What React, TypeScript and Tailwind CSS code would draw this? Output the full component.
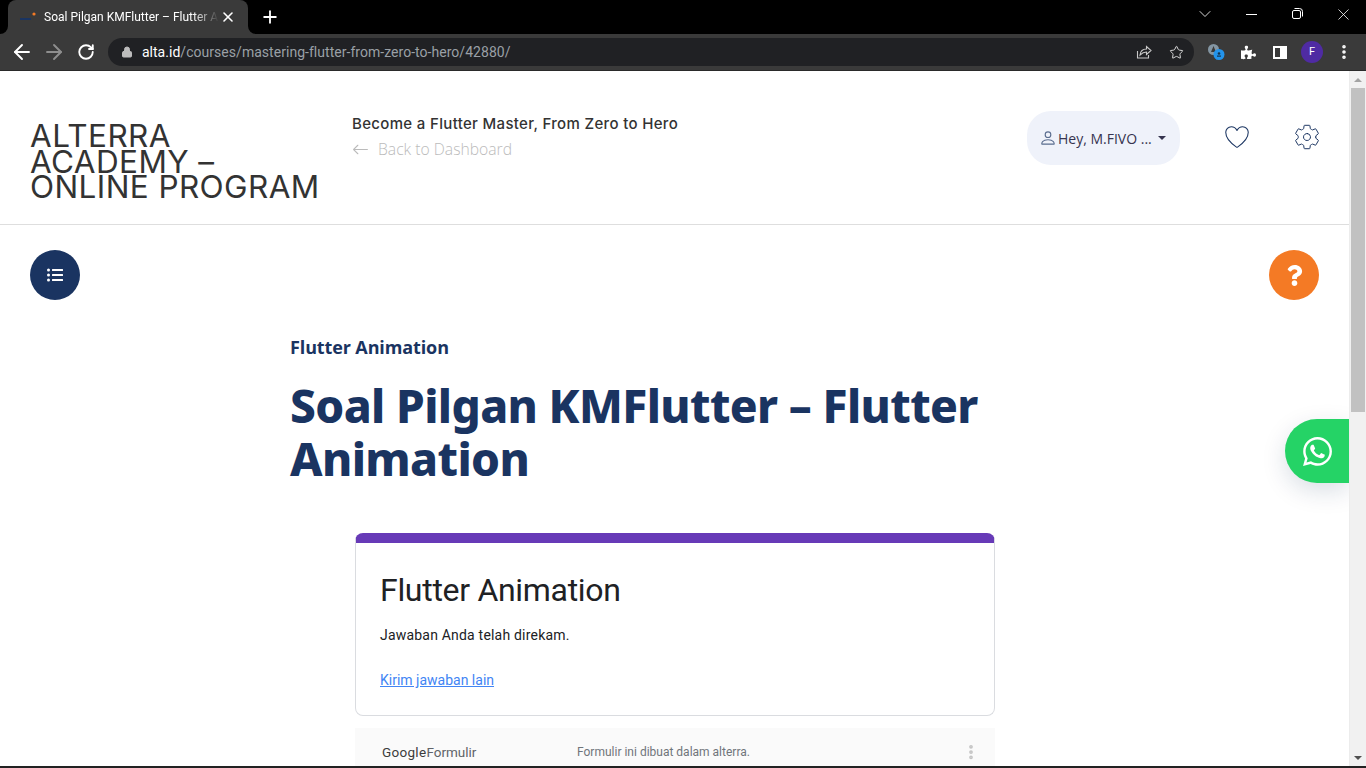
import { ArrowLeft, ArrowRight, ChevronDown, Lock, MoreVertical, Plus, RotateCw, Star, X } from "lucide-react";
import { BsArrowLeft, BsPerson } from "react-icons/bs";
import { FaWhatsapp, FaQuestion, FaListUl, FaPuzzlePiece } from "react-icons/fa";
import { IoHeartOutline, IoSettingsOutline } from "react-icons/io5";

function BrowserChrome() {
    return (
        <div className="shrink-0 font-['Liberation_Sans',sans-serif]">
            {/* Tab strip */}
            <div className="h-[34px] bg-black flex items-end pl-[8px]">
                <div className="relative w-[240px] h-[34px] bg-[#3a3a3a] rounded-t-lg flex items-center pl-[12px]">
                    <div className="absolute -left-2 bottom-0 w-2 h-2 bg-[#3a3a3a]">
                        <div className="w-2 h-2 bg-black rounded-br-lg" />
                    </div>
                    <div className="absolute -right-2 bottom-0 w-2 h-2 bg-[#3a3a3a]">
                        <div className="w-2 h-2 bg-black rounded-bl-lg" />
                    </div>
                    <svg width="18" height="16" viewBox="0 0 18 16" className="shrink-0">
                        <rect x="0" y="9" width="11" height="2" fill="#1a3461" />
                        <circle cx="14" cy="5" r="1.6" fill="#f47a25" />
                    </svg>
                    <span className="ml-[6px] w-[175px] text-[12px] text-white whitespace-nowrap overflow-hidden font-['Roboto',sans-serif] [mask-image:linear-gradient(to_right,black_85%,transparent)]">
                        Soal Pilgan KMFlutter – Flutter Animation
                    </span>
                    <X size={16} strokeWidth={2.4} className="text-white shrink-0 ml-[1px]" />
                </div>
                <Plus size={20} strokeWidth={2.2} className="text-white ml-[12px] mb-[7px]" />
                <div className="flex-1" />
                <div className="flex items-center self-start h-[28px] text-white">
                    <ChevronDown size={20} strokeWidth={1} className="mr-[31px]" />
                    <div className="w-[11px] h-px bg-white mr-[34px]" />
                    <svg width="12" height="12" viewBox="0 0 12 12" fill="none" stroke="white" className="mr-[31px]">
                        <rect x="1.500" y="2.5" width="8" height="8" rx="1.5" />
                        <path d="M3.5 .5h5a3 3 0 0 1 3 3v5" />
                    </svg>
                    <X size={19} strokeWidth={1} className="mr-[13px]" />
                </div>
            </div>
            {/* Toolbar */}
            <div className="h-[36px] bg-[#3a3a3a] border-b border-[#2a2a2a] flex items-center pr-[13px] box-content">
                <div className="w-[108px] flex pl-[6px] items-center">
                    <div className="w-[32px] flex justify-center">
                        <ArrowLeft size={24} strokeWidth={1.9} className="text-white" />
                    </div>
                    <div className="w-[32px] flex justify-center">
                        <ArrowRight size={24} strokeWidth={1.9} className="text-[#8e8e8e]" />
                    </div>
                    <div className="w-[32px] flex justify-center">
                        <RotateCw size={18} strokeWidth={2.5} className="text-white" />
                    </div>
                </div>
                <div className="w-[1087px] h-[28px] rounded-full bg-[#202124] flex items-center pl-[13px] pr-[10px] text-[14px] tracking-[0.035px] font-['Roboto',sans-serif]">
                    <Lock size={12} fill="#bdbdbd" className="text-[#bdbdbd]" />
                    <span className="ml-[9px] text-white">alta.id</span>
                    <span className="text-[#9aa0a6]">/courses/mastering-flutter-from-zero-to-hero/42880/</span>
                    <div className="flex-1" />
                    <svg width="16" height="16" viewBox="0 0 16 16" fill="none" stroke="#c8c8c8" strokeWidth="1.1">
                        <path d="M1.5 7v7h11v-3" />
                        <path d="M4 11c.5-4 3-6 6.5-6V2.5l4.5 4-4.500 4V8C8 8 6 9 4 11z" />
                    </svg>
                    <Star size={15} strokeWidth={1.6} className="text-[#d8d8d8] ml-[17px]" />
                </div>
                <svg width="18" height="18" viewBox="0 0 18 18" className="ml-[13px] shrink-0">
                    <circle cx="6.500" cy="6.500" r="5.500" fill="#8496a3" />
                    <path d="M4 9l2.500-6 2.500 6z" fill="#3a3a3a" />
                    <circle cx="12" cy="11.500" r="5.500" fill="#2394ec" />
                    <path d="M9 16.500l3-1h-3z" fill="#2394ec" />
                    <rect x="10" y="12.500" width="4" height="1.200" fill="#12344f" />
                    <circle cx="12" cy="10.500" r="1.300" fill="#12344f" />
                </svg>
                <FaPuzzlePiece size={15} className="text-white ml-[16px] shrink-0" />
                <div className="ml-[17px] w-[14px] h-[13px] border-2 border-white flex justify-end shrink-0">
                    <div className="w-[5px] bg-white" />
                </div>
                <div className="ml-[14px] w-[22px] h-[22px] rounded-full bg-[#4f2ba3] text-white text-[11px] flex items-center justify-center font-['Roboto',sans-serif] shrink-0">
                    F
                </div>
                <MoreVertical size={18} strokeWidth={2.8} className="text-white ml-[12px] shrink-0" />
            </div>
        </div>
    );
}

function PageHeader() {
    return (
        <header className="h-[154px] border-b border-[#dedede] flex items-start pl-[30px] pr-[28px] shrink-0">
            <div className="w-[322px] pt-[52px] text-[31.5px] leading-[25.5px] text-[#333] font-['Inter',sans-serif] tracking-[0.4px]">
                ALTERRA
                <br />
                ACADEMY –
                <br />
                ONLINE PROGRAM
            </div>
            <div className="pt-[43px]">
                <div className="text-[15px] leading-5 text-[#333] font-['Inter',sans-serif] font-medium tracking-[0.33px]">
                    Become a Flutter Master, From Zero to Hero
                </div>
                <div className="mt-[4px] flex items-center text-[#bbb] text-[15.7px] leading-[22px] font-light font-['Open_Sans',sans-serif]">
                    <BsArrowLeft size={17} className="mr-[9px]" />
                    Back to Dashboard
                </div>
            </div>
            <div className="flex-1" />
            <div className="mt-[40px] w-[153px] h-[54px] rounded-[24px] bg-[#eff2fa] flex items-center pl-[12px] text-[14px] text-[#36344f] font-['Open_Sans',sans-serif]">
                <BsPerson size={18} className="mr-px text-[#1a3461] opacity-70" />
                Hey, M.FIVO ...
                <span className="ml-[6px] border-x-4 border-t-4 border-x-transparent border-t-[#36344f]" />
            </div>
            <IoHeartOutline size={30} className="mt-[51px] ml-[42px] text-[#1a3461] [&_path]:[stroke-width:18]" />
            <IoSettingsOutline size={28} className="mt-[52px] ml-[41px] text-[#1a3461] [&_path]:[stroke-width:18]" />
        </header>
    );
}

function GoogleForm() {
    return (
        <div className="ml-[65px] w-[640px] font-['Roboto',sans-serif]">
            <div className="h-[183px] rounded-lg border border-[#dadce0] border-t-[10px] border-t-[#673ab7] px-[24px] box-border">
                <div className="mt-[27px] text-[32px] leading-10 text-[#202124] tracking-[-0.3px]">Flutter Animation</div>
                <div className="mt-[15px] text-[14px] leading-5 text-[#202124] tracking-[0.2px]">Jawaban Anda telah direkam.</div>
                <a className="block mt-[25px] text-[14px] leading-5 text-[#4285f4] underline">Kirim jawaban lain</a>
            </div>
            <div className="mt-[12px] h-[48px] bg-[#fafafa] flex items-center pl-[27px] pr-[15px]">
                <span className="w-[195px] text-[13.5px] text-[#5f6368]">
                    <span className="text-[#3c3c3c] tracking-[0.3px]">Google</span>Formulir
                </span>
                <span className="text-[12px] text-[#70757a]">Formulir ini dibuat dalam alterra.</span>
                <div className="flex-1" />
                <MoreVertical size={18} strokeWidth={3} className="text-[#c4c4c4]" />
            </div>
        </div>
    );
}

export default function App() {
    return (
        <div className="w-[1366px] h-[768px] overflow-hidden flex flex-col bg-white">
            <BrowserChrome />
            <div className="flex-1 flex min-h-0">
                <main className="relative flex-1 min-w-0 overflow-hidden">
                    <PageHeader />
                    <div className="px-[30px] pt-[25px] flex justify-between">
                        <div className="w-[50px] h-[50px] rounded-full bg-[#1a3461] flex items-center justify-center">
                            <FaListUl size={16} className="text-white" />
                        </div>
                        <div className="w-[50px] h-[50px] rounded-full bg-[#f47a25] flex items-center justify-center">
                            <FaQuestion size={21} className="text-white" />
                        </div>
                    </div>
                    <div className="ml-[290px] w-[720px]">
                        <div className="mt-[35px] text-[18px] leading-6 font-bold text-[#1a3461] font-['Open_Sans',sans-serif] tracking-[-0.12px]">
                            Flutter Animation
                        </div>
                        <h1 className="mt-[20px] text-[46px] leading-[53px] font-extrabold text-[#1a3461] font-['Noto_Sans',sans-serif] tracking-[-0.62px]">
                            Soal Pilgan KMFlutter – Flutter Animation
                        </h1>
                        <div className="mt-[48px]">
                            <GoogleForm />
                        </div>
                    </div>
                    {/* floating WhatsApp button */}
                    <div className="absolute right-0 top-[348px] w-[64px] h-[64px] rounded-l-full bg-[#25d366] shadow-[0_8px_24px_rgba(0,40,80,0.15)] flex items-center justify-center">
                        <FaWhatsapp size={33} className="text-white" />
                    </div>
                </main>
                {/* Scrollbar */}
                <div className="w-[17px] shrink-0 bg-[#f1f1f1] border-l border-[#ececec] flex flex-col items-center">
                    <div className="h-[17px] flex items-center justify-center">
                        <span className="border-x-[4px] border-b-[4px] border-x-transparent border-b-[#a3a3a3]" />
                    </div>
                    <div className="w-[14px] h-[324px] bg-[#c1c1c1]" />
                    <div className="flex-1" />
                    <div className="h-[17px] flex items-center justify-center">
                        <span className="border-x-[4px] border-t-[4px] border-x-transparent border-t-[#505050]" />
                    </div>
                </div>
            </div>
            <div className="h-[2px] bg-[#222] shrink-0" />
        </div>
    );
}
